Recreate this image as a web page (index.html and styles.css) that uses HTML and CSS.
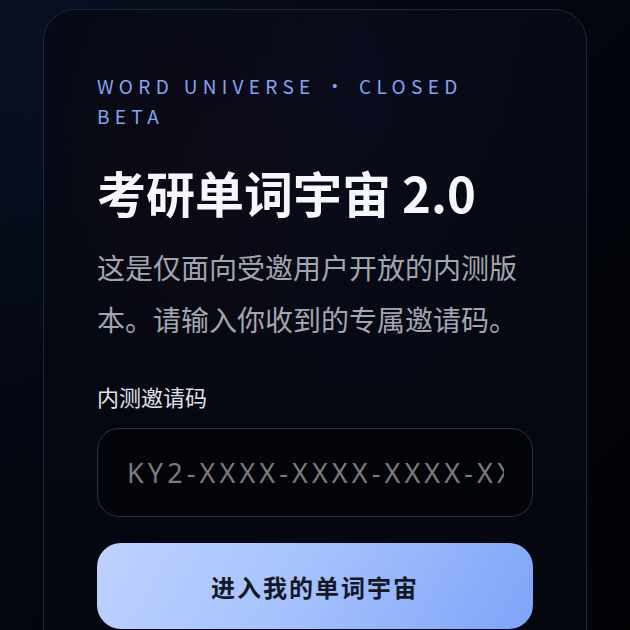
FILE: index.html
```html
<!DOCTYPE html>
<html lang="zh-CN">
<head>
    <meta charset="UTF-8">
    <meta name="viewport" content="width=device-width, initial-scale=1.0">
    <title>考研单词宇宙 2.0 · 内测</title>
    <link rel="stylesheet" href="styles.css">
</head>
<body>
<div class="page">
    <div class="beta-card">
        <div class="eyebrow">WORD UNIVERSE · CLOSED BETA</div>
        <h1 class="title">考研单词宇宙 2.0</h1>
        <p class="intro">这是仅面向受邀用户开放的内测版本。请输入你收到的专属邀请码。</p>

        <label class="field-label" for="invite">内测邀请码</label>
        <input id="invite" class="invite-input" type="text" placeholder="KY2-XXXX-XXXX-XXXX-XXXX">

        <button class="enter-btn" type="button">进入我的单词宇宙</button>
    </div>
</div>
</body>
</html>
```

FILE: styles.css
```css
html, body {
    margin: 0;
    padding: 0;
}

body {
    font-family: 'Noto Sans CJK SC', 'Noto Sans', sans-serif;
    min-height: 100vh;
    background-color: #03060d;
    background-image:
        radial-gradient(circle at 6% 8%, rgba(14, 28, 56, 0.35), transparent 40%),
        linear-gradient(135deg, #050b18 0%, #03060f 45%, #010204 100%);
    overflow: hidden;
}

.page {
    padding-top: 9px;
    display: flex;
    justify-content: center;
}

.beta-card {
    box-sizing: border-box;
    width: 544px;
    padding: 61px 53px 40px;
    border: 1px solid #1d2640;
    border-radius: 32px;
    background-color: #050811;
    background-image:
        radial-gradient(ellipse at 32% 25%, rgba(50, 16, 34, 0.16), transparent 38%),
        radial-gradient(ellipse at 58% 14%, rgba(16, 24, 70, 0.16), transparent 42%),
        linear-gradient(180deg, #060a15 0%, #04070e 100%);
    display: flex;
    flex-direction: column;
}

.eyebrow {
    font-size: 19px;
    line-height: 30px;
    letter-spacing: 0.28em;
    color: #86a3f0;
}

.title {
    margin: 33px 0 0;
    font-size: 49px;
    line-height: 55px;
    font-weight: 700;
    color: #f6f7fc;
}

.intro {
    margin: 22px 0 0;
    font-size: 28px;
    line-height: 52px;
    color: #a2a6af;
}

.field-label {
    margin-top: 36px;
    font-size: 22px;
    line-height: 30px;
    color: #dfe2e9;
}

.invite-input {
    box-sizing: border-box;
    margin-top: 17px;
    width: 100%;
    height: 89px;
    padding: 0 28px 0 29px;
    border: 1px solid #27324d;
    border-radius: 22px;
    background-color: #03050a;
    font-family: 'Noto Sans', sans-serif;
    font-size: 27px;
    letter-spacing: 4.1px;
    color: #e6e8ee;
    outline: none;
}

.invite-input::placeholder {
    color: #7b7b7b;
}

.enter-btn {
    margin-top: 26px;
    width: 100%;
    height: 86px;
    border: none;
    border-radius: 24px;
    background: linear-gradient(120deg, #bfd2ff 0%, #a7c2fd 45%, #7fa4f8 100%);
    font-family: 'Noto Sans CJK SC', sans-serif;
    font-size: 24px;
    font-weight: 700;
    letter-spacing: 2px;
    color: #121826;
    cursor: pointer;
}
```
